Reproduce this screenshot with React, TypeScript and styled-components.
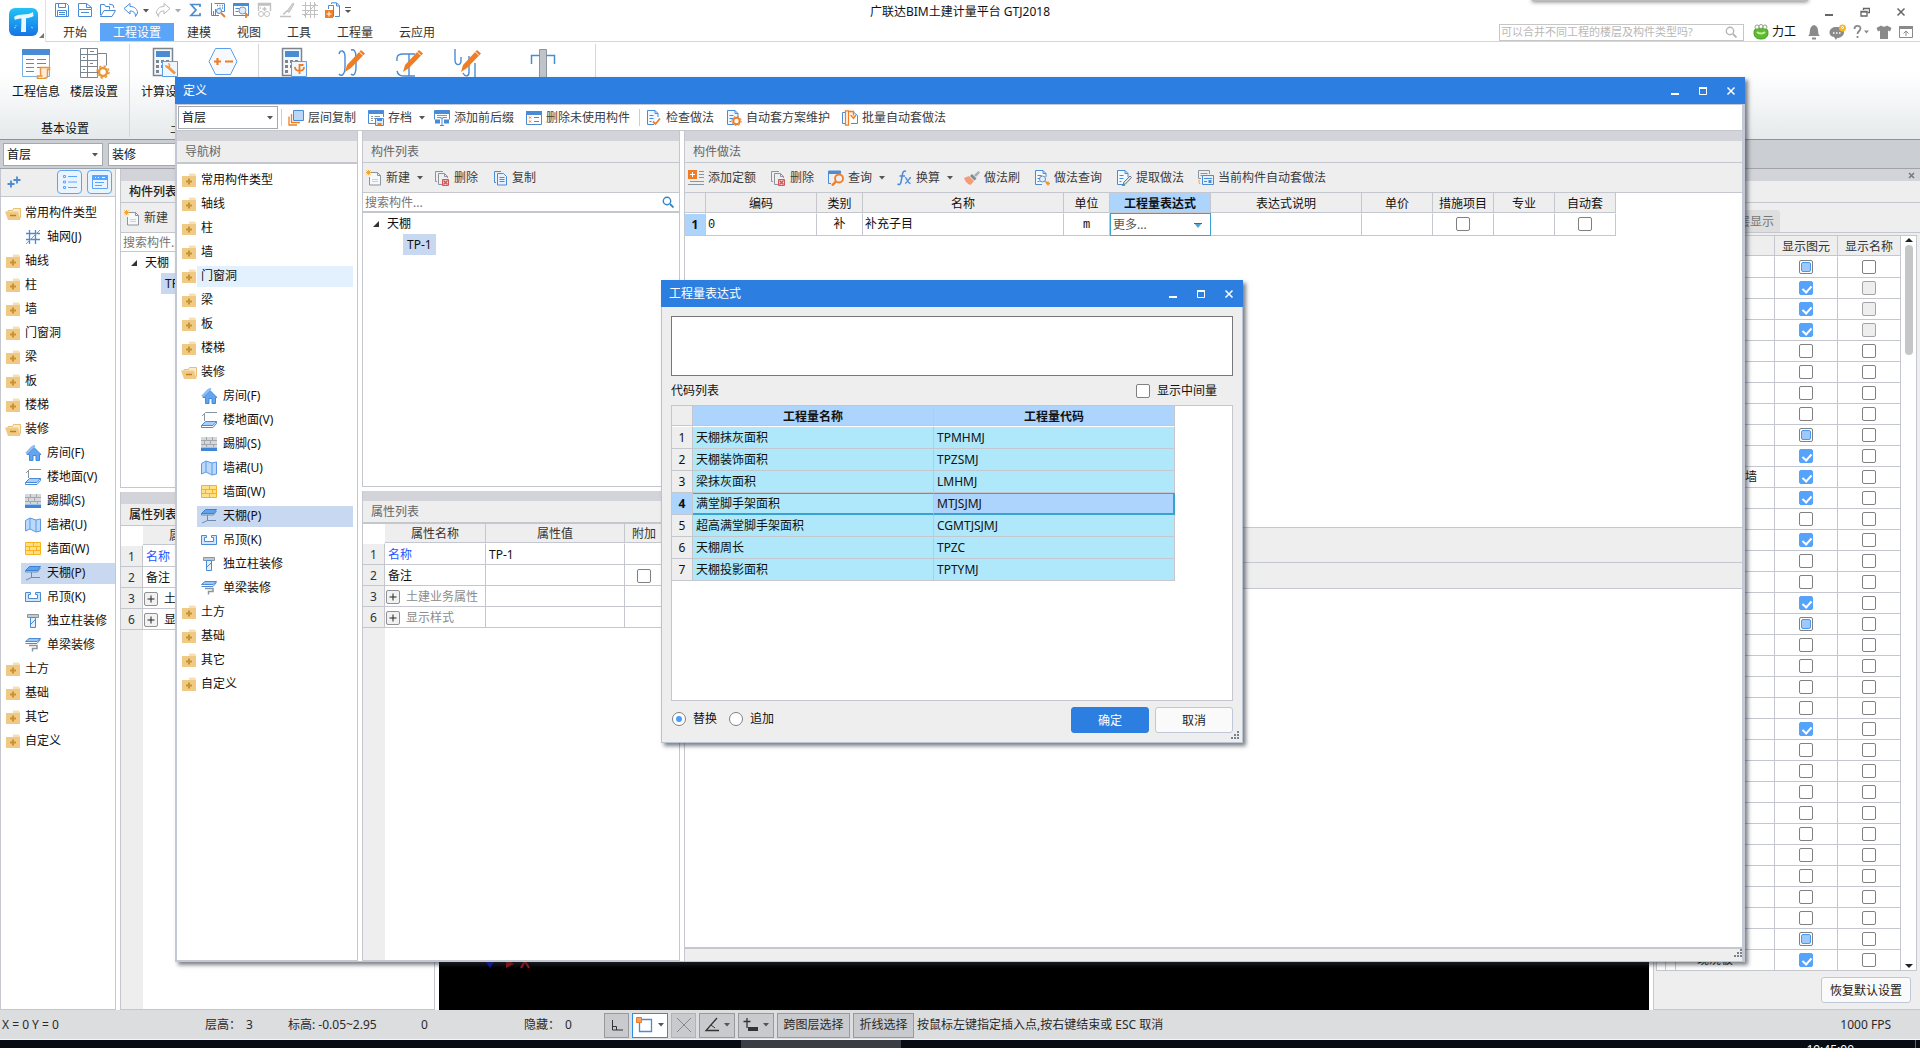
import React from "react";
import styled, { createGlobalStyle, css } from "styled-components";

const c = {
  blue: "#2c7fe1",
  line: "#c4c7ce",
  strip: "#d2d4da",
  face: "#eeeeef",
  sel: "#c8d8f0",
  cellSel: "#acd4fd",
  ib: "#4a8bd6",
  ibl: "#58a6ff",
  io: "#f07d24",
  ig: "#8b959f",
};

const Global = createGlobalStyle`
  * { box-sizing: border-box; }
  body { margin: 0; background: #fff; overflow: hidden; }
  body, button, input, select, textarea, table {
    font-family: "Noto Sans", "Noto Sans CJK SC", sans-serif;
    font-size: 12px;
    line-height: 16px;
    color: #111;
  }
  button { background: none; border: 0; padding: 0; }
  svg { display: block; flex: none; }
`;

/* ---------- icons ---------- */

type IconProps = { w?: number; h?: number; children: React.ReactNode };
const Ic = ({ w = 16, h = 16, children }: IconProps) => (
  <svg width={w} height={h} viewBox={`0 0 ${w} ${h}`} fill="none" stroke={c.ib} strokeWidth="1" aria-hidden="true">
    {children}
  </svg>
);

const Caret = ({ color = "#555" }: { color?: string }) => (
  <Ic w={8} h={4}><path d="M1 0h6L4 3.5z" fill={color} stroke="none" /></Ic>
);

const FolderClosed = () => (
  <Ic>
    <path d="M8 3V1.5h5.500L15 3v1H8z" fill="#f6dfb0" stroke="none" />
    <path d="M1 4h14v11H1z" fill="#f0c984" stroke="none" />
    <path d="M8 6.5v6M5 9.5h6" stroke="#c89433" strokeWidth="2" />
  </Ic>
);
const FolderOpen = () => (
  <Ic>
    <path d="M3 5.5h4.500l1-2h7v9H3z" fill="#fbeccf" stroke="#e9bf73" />
    <path d="M0 6.5h13L15.500 15H3z" fill="#f0c984" stroke="none" />
    <path d="M5 10.5h6" stroke="#b98428" strokeWidth="1.500" />
  </Ic>
);
const GridAxis = () => (
  <Ic><path d="M4.500 1v14M10.500 1v14M1 4.500h14M1 10.500h14" strokeWidth="1.300" /><path d="M1 15L15 1" stroke={c.io} /></Ic>
);
const House = () => (
  <Ic>
    <path d="M1 8.500L7 2l3-1.500" stroke="#8dbdf5" strokeWidth="2" />
    <path d="M2 9.500L9 2.500l7 7h-1.500v6H11v-5H8v5H4.500v-6z" fill="#62a5ee" stroke="#4188dc" />
  </Ic>
);
const FloorIcon = () => (
  <Ic>
    <path d="M3.500 9V1.500M1 4L4.500.500H16" stroke={c.ig} />
    <path d="M4.500 9.500h11L12 13.500H.5z" fill="#a9cdf7" />
    <path d="M.5 13.500v2H12l3.500-4v-2" />
  </Ic>
);
const Skirting = () => (
  <Ic>
    <path d="M0 1h16v10H0z" fill="#d5d7da" stroke="none" />
    <path d="M0 4.500h16M0 8.500h16M5.500 1v3M11.500 1v3M3.500 5v3M9.500 5v3M5.500 9v2M12.500 9v2" stroke="#a3a8ad" />
    <path d="M0 11.500h16V15H0z" fill="#3f86d8" stroke="none" />
  </Ic>
);
const Dado = () => (
  <Ic><path d="M.5 3.500L5 1l6 2 4.500-1v12L11 15l-6-3-4.500 2z" fill="#bcd8fa" stroke="#5b9be6" /><path d="M5 1v11M11 3v12" stroke="#5b9be6" /></Ic>
);
const WallFace = () => (
  <Ic>
    <path d="M.5 1.500h15v12H.5z" fill="#ffe08a" stroke="#f9b21c" />
    <path d="M.5 5.500h15M.5 9.500h15M8.500 1.500v4M4.500 5.500v4M11.500 5.500v4M8.500 9.500v4" stroke="#f9b21c" />
  </Ic>
);
const Ceiling = () => (
  <Ic>
    <path d="M4.500 1.500h11l-3 4H.5z" fill="#5ea3ee" stroke="#3b81d4" />
    <path d="M.5 5.500v1.500h12l3-4M6.500 7v6M1 15l5.500-2.500H15" stroke="#6f8ba8" />
  </Ic>
);
const Hung = () => (
  <Ic><path d="M.5 3.500h5v2h-2v4h9v-4h-2v-2h5v9H.5z" fill="#d4e6fb" /></Ic>
);
const ColumnDeco = () => (
  <Ic><path d="M2.500 1.500h11v3h-11z" fill="#c4c9cf" stroke={c.ig} /><path d="M5.500 4.500h5v10h-5z" fill="#e4effc" /><path d="M6 11l4-4" /></Ic>
);
const BeamDeco = () => (
  <Ic>
    <path d="M4 1.500h11.500L12 4.500H.5z" fill="#9cc6f6" /><path d="M.5 6.500H12l3.500-4" />
    <path d="M4 8.500h8v3H7.500v3" stroke={c.ig} strokeWidth="1.500" />
  </Ic>
);
const NewDoc = () => (
  <Ic><path d="M4.500 2.500h7l3 3v9.500h-11V7" fill="#f7f8f9" stroke={c.ig} /><path d="M11.500 2.500v3h3" stroke={c.ig} /><path d="M6 9.500h6M6 11.500h6" stroke="#cbd0d5" />
    <path d="M.5.5l4 4M4.500.5l-4 4M2.500 0v5M0 2.500h5" stroke="#f0a63c" /></Ic>
);
const DelDoc = () => (
  <Ic><path d="M3 11.500H1.500v-10H9" stroke={c.ig} /><path d="M8 14.500H4.500v-11h6l3 3V8" stroke={c.ig} /><path d="M10.500 3.500v3h3" stroke={c.ig} />
    <path d="M8.500 9.500h6v6h-6z" fill="#f6dada" stroke="#d2555a" /><path d="M9.500 10.500l4 4M13.500 10.500l-4 4" stroke="#d2555a" strokeWidth="1.500" /></Ic>
);
const CopyDoc = () => (
  <Ic><path d="M4 12.500H2.500v-11H9" /><path d="M5.500 3.500h6l3 3v8.500h-9z" fill="#e7f1fd" /><path d="M7.500 7.500h5M7.500 9.500h5M7.500 11.500h5" /></Ic>
);
const LayerCopy = () => (
  <Ic><path d="M5.500.500h10v10h-10z" fill="#b9d7fb" /><path d="M3.500 4v8.500H12M1 6.500v8.500H9" stroke={c.io} strokeWidth="1.300" /></Ic>
);
const Archive = () => (
  <Ic><path d="M.5.500h15v3H.5z" fill={c.ib} /><path d="M.5 4v9.500H7M15.500 4v3" /><path d="M3 6.500h2M6.500 6.500H12M3 8.500h2M3 10.500h2M6 8.500h2" stroke={c.ig} />
    <path d="M7.500 8.500h8v7h-8z" fill="#dcebfc" /><path d="M9 9h5v2H9z" fill={c.ib} stroke="none" /><path d="M9.500 13h4v2.500h-4z" fill={c.io} stroke="none" /></Ic>
);
const Affix = () => (
  <Ic><path d="M.5.500h15v3H.5z" fill={c.ib} /><path d="M.5 3.500v6M15.500 3.500v6" /><path d="M3 5.500h10M3 7.500h4M9 7.500h4" stroke={c.ig} />
    <path d="M1 9.500h5v4H1zM10 9.500h5v4h-5z" fill={c.ib} stroke="none" /><path d="M8 8v7M6 15.500h4M6.500 8h3" /></Ic>
);
const Unused = () => (
  <Ic><path d="M.5 1.500h15v13H.5z" /><path d="M.5 1.500h15v3H.5z" fill={c.ib} /><path d="M3 6.500l2 2M5 6.500l-2 2M3 10.500l2 2M5 10.500l-2 2" stroke={c.io} /><path d="M8 7.500h5M8 11.500h5" /></Ic>
);
const PageB = ({ children }: { children: React.ReactNode }) => (
  <Ic><path d="M8 14.500H1.500v-14H9l3 3V7" fill="#f2f8ff" /><path d="M9 .5v3h3" /><path d="M3.500 5.500h4M3.500 8.500h4M3.500 11.500h2" />{children}</Ic>
);
const Check = () => <PageB><path d="M7 11.500l2.500 2.500L14 8.500" stroke={c.io} strokeWidth="1.800" /></PageB>;
const Maintain = () => (
  <PageB><circle cx="10.500" cy="11" r="3.200" stroke={c.io} strokeWidth="2" fill="#fff" /><circle cx="10.500" cy="11" r="4.700" stroke={c.io} strokeDasharray="1.700 2" /></PageB>
);
const Batch = () => (
  <Ic><path d="M3 13.500H.5v-11H3M10 2.500h2l3.500 3v8H9" /><path d="M3.500.8h3v14.400h-3z" stroke={c.io} strokeWidth="1.300" fill="#fff" /><path d="M6.500 1.500h5v4M8.500 5l3 3.500L14 5" stroke={c.io} strokeWidth="1.300" fill="#ffe6d2" /></Ic>
);
const AddQuota = () => (
  <Ic><path d="M0 0h9v9H0z" fill={c.io} stroke="none" /><path d="M4.500 2v5M2 4.500h5" stroke="#fff" /><path d="M11 1.500h5M11 4.500h5M11 7.500h5M2 11.500h14M0 14.500h16" stroke={c.ig} /></Ic>
);
const Query = () => (
  <Ic><path d="M.5 1h12v2.500H.5z" fill={c.ib} /><path d="M.5 3v10.500H3" /><circle cx="11" cy="8.500" r="4" stroke={c.io} strokeWidth="1.800" /><path d="M8 11.500L4 15.500" stroke={c.io} strokeWidth="2.400" /></Ic>
);
const Fx = () => (
  <Ic><path d="M10 1.500C8 .5 7 1.500 6.500 4L5 12c-.5 2.500-1.500 3-3.500 2M3.500 6H9" strokeWidth="1.500" /><path d="M9 7.500c2-.5 2 6 5.500 6M15 7.500c-2 0-4 6-6 6" strokeWidth="1.300" /></Ic>
);
const Brush = () => (
  <Ic><path d="M0 8l5-2 5 5-3.500 4C3 14 1 11 0 8z" fill="#f59b78" stroke="none" /><path d="M6 6l2-2 4.500 4.500-2 2z" fill="#7e8a95" stroke="none" /><path d="M10 5l4.500-4 1.500 1.500-4 4.500z" fill="#a6aeb6" stroke="none" /></Ic>
);
const MethodQuery = () => (
  <PageB><circle cx="8.500" cy="9" r="3" fill="#e4effc" stroke="#6b87ad" /><path d="M11 11l3 3M14 11.500v4M12 13.500h4" stroke="#e8962e" strokeWidth="1.500" /></PageB>
);
const Extract = () => (
  <PageB><path d="M7 15l1-3 6-6 1.500 1.500-6 6.500z" fill="#dfe4e8" stroke="#6d7880" /><path d="M6 15.500l3-1" stroke="#3a9bb5" strokeWidth="2" /></PageB>
);
const CurrentAuto = () => (
  <Ic><path d="M3 8.500H.5v-8h11V4" stroke={c.ig} /><path d="M2.500 3.500h7M2.500 5.500h2" stroke={c.ig} /><path d="M1 10v3l2 1" stroke={c.io} strokeDasharray="1.500 1" />
    <path d="M4.500 5.500h11v9h-11z" fill="#e4effc" /><path d="M6 8.500h8M6 11.500h3" /><path d="M10.500 10h3v3h-3z" fill={c.ib} stroke="none" /></Ic>
);
const SearchIcon = ({ color = "#2f86c9" }: { color?: string }) => (
  <Ic w={12} h={12}><circle cx="5" cy="5" r="3.700" stroke={color} strokeWidth="1.400" /><path d="M8 8l3.500 3.500" stroke={color} strokeWidth="1.800" /></Ic>
);
const MinIcon = ({ color = "#fff" }: { color?: string }) => <Ic w={10} h={10}><path d="M1 8h8" stroke={color} strokeWidth="2" /></Ic>;
const MaxIcon = () => <Ic w={10} h={10}><path d="M1.500 2v6.500h7V2" stroke="#fff" /><path d="M1 2h8" stroke="#fff" strokeWidth="2" /></Ic>;
const CloseIcon = ({ color = "#fff" }: { color?: string }) => <Ic w={10} h={10}><path d="M1.500 1.500l7 7M8.500 1.500l-7 7" stroke={color} strokeWidth="1.500" /></Ic>;
const RestoreIcon = () => <Ic w={10} h={10}><path d="M3.500 3V1.500h6v4H7.500" stroke="#666" strokeWidth="1.300" /><path d="M1 4.500h6v4.500H1z" stroke="#666" strokeWidth="1.300" /><path d="M1 5h6" stroke="#666" /></Ic>;
const Grip = () => (
  <Ic w={8} h={8}><path d="M6 0h2v2H6zM3 3h2v2H3zM6 3h2v2H6zM0 6h2v2H0zM3 6h2v2H3zM6 6h2v2H6z" fill="#7c828c" stroke="none" /></Ic>
);

const Logo = () => (
  <Ic w={30} h={30}>
    <defs>
      <linearGradient id="logo" x1="0" y1="0" x2="0" y2="1"><stop offset="0" stopColor="#22c3f7" /><stop offset="1" stopColor="#1673e6" /></linearGradient>
    </defs>
    <rect x="0" y="0" width="29" height="28" rx="6" fill="url(#logo)" stroke="none" />
    <path d="M5 9c5-4 13-1 19-5l.5 4c-2 1.500-5 2-7.500 2.300L17 24h-5l.5-13.500C10 10.500 8 11 6 12z" fill="#e9f6ff" stroke="none" />
    <path d="M5 20l2-1M22 19l2 1M7 17v1" stroke="#8fd8ff" />
  </Ic>
);

/* quick access */
const quick: Array<[string, React.ReactNode] | null> = [
  ["保存", <Ic><path d="M1.500 1.500h11l2 2v11h-13z" /><path d="M4.500 1.500h7v4h-7zM3.500 14.500v-6h9v6M5 10.500h6M5 12.500h6" /></Ic>],
  ["新建工程", <Ic><path d="M1.500 7V1.500h8l5 4V7M9.500 1.500v4h5" /><path d="M1.500 7.500h13v7h-13z" /><path d="M4 10.500h8" /></Ic>],
  ["打开", <Ic><path d="M.5 13V2.500h4l1 2h4v3M9 2l4 1 1 3" /><path d="M.5 14.500L4 8.500h11.500L12 14.500z" /></Ic>],
  ["撤销", <Ic><path d="M1 6.500l6-5v3c5 0 7.500 3 7.500 6.500l-2 3.500c0-4-2-5.500-5.500-5.500v3z" /></Ic>],
  null,
  ["重做", <Ic><path d="M15 6.500l-6-5v3C4 4.500 1.500 7.500 1.500 11l2 3.500c0-4 2-5.500 5.500-5.500v3z" stroke="#b6b8bb" /></Ic>],
  null,
  ["汇总计算", <Ic><path d="M13 5V2.500H4l5 5.500-5 5.500h9V11" strokeWidth="1.700" /></Ic>],
  ["查看工程量", <Ic><path d="M1.500 1v12.500H9M3.500 13V9M5.500 13V7" /><path d="M4.500 1.500h10v8h-6" /><path d="M7 3.500h1M9.500 3.500h1M12 3.500h1M9.500 6h1M12 6h1" strokeWidth="1.500" /><circle cx="9" cy="9" r="2.500" fill="#dfeefd" /><path d="M11 11l4 4" stroke={c.io} strokeWidth="2" /></Ic>],
  ["查看计算式", <Ic><path d="M.5 1.500h15v12H.5z" /><path d="M.5 1.500h15v2H.5z" fill={c.ib} /><path d="M2.500 6.500h4M2.500 9.500h3" /><circle cx="9.500" cy="8.500" r="3.500" fill="#dfeefd" stroke={c.ig} /><path d="M12 11l3.500 3M13 11v5" stroke={c.io} strokeWidth="1.700" /></Ic>],
  ["查看", <Ic><path d="M2.500 9V1.500h12V9M2.500 3h12M8.500 5v4M6.500 7h4M4 6h1" stroke="#c1c1c1" strokeWidth="1.400" /><circle cx="5" cy="12" r="2.500" stroke="#c1c1c1" /><circle cx="11" cy="12" r="2.500" stroke="#c1c1c1" /></Ic>],
  ["绘制", <Ic><path d="M8 9l6-8 1 1-5 8.500z" fill="#d2d2d2" stroke="#c1c1c1" /><path d="M8 9c-2 1-2 3-4 3M1 14.500h11" stroke="#c1c1c1" strokeWidth="1.600" /></Ic>],
  ["轴网", <Ic><path d="M3.500 0v16M8.500 0v16M12.500 0v16M0 3.500h16M0 8.500h16M0 12.500h16M2 14L14 2" stroke="#c1c1c1" /></Ic>],
  ["导入", <Ic><path d="M3.500 7V3.500h5v11h-1" /><path d="M6.500 2V.8h5l3 3v10.700H10M11.500 1v3h3" /><path d="M0 8h8v8H0z" fill={c.io} stroke="none" /><path d="M4 9.500v5M1.500 12h5" stroke="#fff" /></Ic>],
];

/* ribbon */
const RInfo = () => (
  <Ic w={32} h={32}><path d="M2.500 2.500h27v27h-27z" stroke="#7aaee8" /><path d="M2 2h28v6H2z" fill={c.ib} stroke="none" />
    <path d="M6 12.500h8M17 12.500h9M6 16.500h8M17 16.500h9M6 20.500h8M17 20.500h6M6 24.500h8" stroke="#7b858f" />
    <path d="M20.500 20.500h9v2h-2v6c0 3-2 3-4 3h-6v-2.500h5c-2 0-2-1-2-3z" fill="#fdebd8" stroke="#e8963a" strokeWidth="1.500" /></Ic>
);
const RFloor = () => (
  <Ic w={32} h={32}><path d="M2.500 1.500h17v29h-17zM2.500 7.500h17M2.500 13.500h17M2.500 19.500h17M2.500 25.500h17M9.500 1.500v29M12 4.500h4M5 10.500h2M12 16.500h3M5 22.500h2M19.500 6.500h9v12" stroke="#7b858f" />
    <circle cx="25" cy="25" r="4" stroke="#e8963a" strokeWidth="2.500" fill="#fff" /><circle cx="25" cy="25" r="6" stroke="#e8963a" strokeWidth="1.500" strokeDasharray="2.300 2.400" /></Ic>
);
const RCalc = ({ children }: { children?: React.ReactNode }) => (
  <Ic w={32} h={32}><path d="M4.500 1.500h19v27h-19z" stroke="#7b858f" strokeWidth="1.500" fill="#f6f7f8" /><path d="M7 4h14v6H7z" fill={c.ib} stroke="none" />
    <path d="M7 13h3v3H7zM12 13h3v3h-3zM17 13h3v3h-3zM7 18h3v3H7zM12 18h3v3h-3zM7 23h3v3H7z" fill="#7b858f" stroke="none" />
    <path d="M13.500 14.500h15v15h-15z" fill="#eef6ff" stroke="#5a9fec" />{children}</Ic>
);
const RWrench = () => <RCalc><path d="M19 20l7 6.500" stroke="#ee9b48" strokeWidth="3" /><path d="M16 18c0 4 4 4 5 2s0-4-2-4l1 3z" fill="#ee9b48" stroke="none" /></RCalc>;
const RRebar = () => <RCalc><path d="M17 20c0 5 9 5 9 0M21.500 27v-9h4" stroke={c.io} strokeWidth="1.800" /></RCalc>;
const RHex = () => (
  <Ic w={32} h={32}><path d="M8.500 1.500h15L30 14.500l-6.500 13h-15L2 14.500z" stroke="#5a9fec" fill="#f6faff" /><path d="M7 14.500h7M10.500 11v7M18 14.500h8" stroke={c.io} strokeWidth="2.200" /></Ic>
);
const RPen = ({ d }: { d: string }) => (
  <Ic w={32} h={32}><path d={d} strokeWidth="1.400" /><path d="M9 25l2-7L25 3l4 3.500L15 21z" fill={c.io} stroke="none" /><path d="M23 4.500l4 4" stroke="#fff" /></Ic>
);
const RBeam = () => (
  <Ic w={32} h={32}><path d="M12.500 2.500h7V32h-7z" fill="#bfc4ca" stroke={c.ig} /><path d="M4.500 17V8.500h8M19.500 8.500h8V17" strokeWidth="1.500" /></Ic>
);

/* ---------- header ---------- */

const Page = styled.div`
  position: relative;
  display: flex;
  flex-direction: column;
  height: 100vh;
  background: #fff;
  overflow: hidden;
`;
const Header = styled.header`
  display: grid;
  grid-template-columns: 46px 1fr;
  grid-template-rows: 23px 19px;
`;
const LogoBox = styled.div`
  grid-area: 1 / 1 / 3 / 2;
  display: flex;
  align-items: flex-end;
  padding: 0 0 4px 9px;
  border-right: 1px solid #e2e2e2;
`;
const TopRow = styled.div`
  grid-area: 1 / 1 / 2 / 3;
  display: grid;
  grid-template-columns: minmax(0, 1fr) auto minmax(0, 1fr);
  align-items: center;
`;
const Quick = styled.div`
  display: flex;
  align-items: center;
  padding: 0 0 3px 50px;
`;
const QuickButton = styled.button`
  width: 23px;
  display: flex;
  justify-content: center;
`;
const QuickCaret = styled.button`
  width: 9px;
  padding-top: 2px;
`;
const AppTitle = styled.h1`
  margin: 0;
  font-size: 12px;
  font-weight: 400;
  line-height: 20px;
`;
const AppControls = styled.div`
  display: flex;
  justify-content: flex-end;
  gap: 26px;
  padding-right: 14px;
`;
const PeekShadow = styled.div`
  position: absolute;
  top: -4px;
  right: 112px;
  width: 276px;
  height: 5px;
  background: #bbb;
  box-shadow: 0 1px 4px rgba(0, 0, 0, 0.5);
`;
const TabRow = styled.div`
  grid-area: 2 / 2 / 3 / 3;
  display: flex;
  padding-left: 4px;
  border-bottom: 1px solid #d4d6d9;
`;
const RibbonTab = styled.button<{ $active?: boolean }>`
  padding: 1px 13px 0;
  color: ${(p) => (p.$active ? "#fff" : "#333")};
  background: ${(p) => (p.$active ? "#5aa5f8" : "transparent")};
`;
const HeaderTools = styled.div`
  display: flex;
  align-items: center;
  gap: 7px;
  margin-left: auto;
  padding-right: 7px;
`;
const HelpSearch = styled.div`
  display: flex;
  align-items: center;
  width: 245px;
  height: 17px;
  margin-right: 2px;
  padding-right: 6px;
  border: 1px solid #c6c6c6;
  input {
    flex: 1;
    min-width: 0;
    border: 0;
    padding: 0 1px;
    font-size: 11px;
    line-height: 14px;
    outline: 0;
    background: none;
  }
  input::placeholder { color: #b8b8b8; }
`;
const UserButton = styled.button`
  display: flex;
  align-items: center;
  gap: 3px;
  margin-right: 3px;
`;

const Ribbon = styled.div`
  display: flex;
  height: 98px;
  padding: 2px 0 2px 1px;
  background: linear-gradient(#fff 30%, #e6eaec);
  border-bottom: 1px solid #8e9298;
`;
const Group = styled.section`
  display: flex;
  flex-direction: column;
  justify-content: space-between;
  padding: 3px 6px 0;
  border-right: 1px solid #d5d7da;
  text-align: center;
`;
const GroupButtons = styled.div`
  display: flex;
`;
const RibbonButton = styled.button<{ $wide?: boolean }>`
  width: ${(p) => (p.$wide ? 92 : 58)}px;
  display: flex;
  flex-direction: column;
  align-items: center;
  gap: 5px;
`;

/* ---------- shared parts ---------- */

const SelectBox = styled.div<{ $w: number }>`
  position: relative;
  flex: none;
  width: ${(p) => p.$w}px;
  height: 23px;
  border: 1px solid #a5a8ad;
  background: #fff;
  select {
    appearance: none;
    width: 100%;
    height: 100%;
    padding: 0 3px;
    border: 0;
    background: transparent;
    outline: 0;
  }
  svg { position: absolute; right: 3px; top: 9px; pointer-events: none; }
`;
const Pick = ({ w, value, label }: { w: number; value: string; label: string }) => (
  <SelectBox $w={w}>
    <select aria-label={label} defaultValue={value}><option>{value}</option></select>
    <Caret />
  </SelectBox>
);

const FloorBar = styled.div`
  display: flex;
  gap: 5px;
  height: 29px;
  padding: 3px;
  background: #cbced3;
  border-bottom: 1px solid #a0a4aa;
`;
const Workspace = styled.main`
  flex: 1;
  min-height: 0;
  display: flex;
  gap: 4px;
`;
const Column = styled.div<{ $w?: number }>`
  display: flex;
  flex-direction: column;
  gap: 4px;
  min-width: 0;
  ${(p) => (p.$w ? css`flex: none; width: ${p.$w}px;` : css`flex: 1;`)}
`;
const Panel = styled.section<{ $h?: number; $open?: boolean; $bare?: boolean }>`
  display: flex;
  flex-direction: column;
  min-height: 0;
  ${(p) => (p.$h ? css`flex: none; height: ${p.$h}px;` : css`flex: 1;`)}
  background: #fff;
  border: 1px solid ${c.line};
  border-top: 0;
  ${(p) => p.$open && css`border-right: 0; border-bottom: 0;`}
  ${(p) => p.$bare && css`border: 0;`}
`;
const EdgePanel = styled(Panel)`
  border-left: 0;
`;
const Strip = styled.div<{ $h?: number }>`
  flex: none;
  display: flex;
  justify-content: flex-end;
  align-items: center;
  height: ${(p) => p.$h || 10}px;
  padding-right: 5px;
  background: ${c.strip};
`;
const PanelTitle = styled.h2<{ $thick?: boolean; $strong?: boolean }>`
  flex: none;
  height: ${(p) => (p.$thick ? 23 : 22)}px;
  margin: 0;
  padding: 0 8px;
  font-size: 12px;
  font-weight: ${(p) => (p.$strong ? 500 : 400)};
  line-height: 21px;
  color: ${(p) => (p.$strong ? "#222" : "#666")};
  background: ${c.face};
  border-bottom: ${(p) => (p.$thick ? 2 : 1)}px solid ${c.line};
`;
const Toolbar = styled.div<{ $gap?: number }>`
  flex: none;
  display: flex;
  align-items: center;
  gap: ${(p) => p.$gap || 5}px;
  height: 30px;
  background: ${c.face};
  border-bottom: 1px solid ${c.line};
`;
const ToolButton = styled.button<{ $menu?: boolean }>`
  display: flex;
  align-items: center;
  gap: 4px;
  flex: none;
  height: 22px;
  padding: 0 ${(p) => (p.$menu ? 2 : 6)}px 0 3px;
  color: #3c3c3c;
  white-space: nowrap;
`;
const MenuCaret = styled.span`
  margin-left: 2px;
`;
const Tool = ({ icon, text, menu }: { icon: React.ReactNode; text: string; menu?: boolean }) => (
  <ToolButton $menu={menu}>{icon}{text}{menu && <MenuCaret><Caret /></MenuCaret>}</ToolButton>
);
const SearchRow = styled.div<{ $thick?: boolean }>`
  flex: none;
  display: flex;
  align-items: center;
  height: ${(p) => (p.$thick ? 20 : 19)}px;
  padding-right: 5px;
  border-bottom: ${(p) => (p.$thick ? 2 : 1)}px solid ${c.line};
  input {
    flex: 1;
    min-width: 0;
    height: 18px;
    padding: 0 2px;
    border: 0;
    outline: 0;
    background: none;
  }
  input::placeholder { color: #757575; }
`;

const Tick = styled.input<{ $mixed?: boolean }>`
  appearance: none;
  position: relative;
  flex: none;
  width: 14px;
  height: 14px;
  margin: 0;
  vertical-align: middle;
  border: 1px solid #808080;
  border-radius: 2px;
  background: #fff;
  &:disabled { background: #eee; border-color: #a4a4a4; }
  &:checked { background: #56a3fb; border-color: #56a3fb; }
  &:checked::after {
    content: "";
    position: absolute;
    left: 4px;
    top: 2px;
    width: 4px;
    height: 7px;
    border: solid #fff;
    border-width: 0 2px 2px 0;
    transform: rotate(42deg);
  }
  ${(p) => p.$mixed && css`
    &::before {
      content: "";
      position: absolute;
      inset: 1px;
      border: 1px solid #4a98f5;
      border-radius: 2px;
      background: #9dc9fd;
    }
  `}
`;

/* ---------- trees ---------- */

type Node = { t: string; icon: React.ReactNode; child?: boolean };
const closed = (t: string): Node => ({ t, icon: <FolderClosed /> });
const finishes: Node[] = [
  { t: "房间(F)", icon: <House />, child: true },
  { t: "楼地面(V)", icon: <FloorIcon />, child: true },
  { t: "踢脚(S)", icon: <Skirting />, child: true },
  { t: "墙裙(U)", icon: <Dado />, child: true },
  { t: "墙面(W)", icon: <WallFace />, child: true },
  { t: "天棚(P)", icon: <Ceiling />, child: true },
  { t: "吊顶(K)", icon: <Hung />, child: true },
  { t: "独立柱装修", icon: <ColumnDeco />, child: true },
  { t: "单梁装修", icon: <BeamDeco />, child: true },
];
const tail: Node[] = [
  ...["轴线", "柱", "墙", "门窗洞", "梁", "板", "楼梯"].map(closed),
  { t: "装修", icon: <FolderOpen /> },
  ...finishes,
  ...["土方", "基础", "其它", "自定义"].map(closed),
];
const mainTree: Node[] = [
  { t: "常用构件类型", icon: <FolderOpen /> },
  { t: "轴网(J)", icon: <GridAxis />, child: true },
  ...tail,
];
const defTree: Node[] = [closed("常用构件类型"), ...tail];

const Tree = styled.ul<{ $inset?: boolean }>`
  list-style: none;
  margin: 0;
  padding: 4px ${(p) => (p.$inset ? 4 : 0)}px 0 4px;
`;
const TreeItem = styled.li<{ $child?: boolean }>`
  display: flex;
  align-items: center;
  height: 24px;
  padding-left: ${(p) => (p.$child ? 16 : 0)}px;
`;
const TreeLabel = styled.button<{ $tone?: string }>`
  flex: 1;
  display: flex;
  align-items: center;
  gap: 6px;
  height: 21px;
  padding-left: 4px;
  background: ${(p) => p.$tone || "transparent"};
  white-space: nowrap;
  text-align: left;
`;
const NavTree = ({ nodes, hover, inset }: { nodes: Node[]; hover?: string; inset?: boolean }) => (
  <Tree $inset={inset}>
    {nodes.map((n) => {
      const tone = n.t === "天棚(P)" ? c.sel : n.t === hover ? "#e3f0fd" : undefined;
      return (
        <TreeItem key={n.t} $child={n.child}>
          {!n.child && n.icon}
          <TreeLabel $tone={tone}>{n.child && n.icon}{n.t}</TreeLabel>
        </TreeItem>
      );
    })}
  </Tree>
);

const CompTree = styled.ul`
  list-style: none;
  margin: 0;
  padding: 0;
  ul { list-style: none; margin: 0; padding: 0 0 0 40px; }
`;
const CompRow = styled.button<{ $on?: boolean }>`
  display: flex;
  align-items: center;
  gap: 8px;
  height: 21px;
  padding: 0 ${(p) => (p.$on ? 4 : 10)}px;
  ${(p) => p.$on && css`background: ${c.sel};`}
`;
const Components = () => (
  <CompTree>
    <li>
      <CompRow><Ic w={6} h={6}><path d="M6 0v6H0z" fill="#333" stroke="none" /></Ic>天棚</CompRow>
      <ul><li><CompRow $on>TP-1</CompRow></li></ul>
    </li>
  </CompTree>
);

/* ---------- tables ---------- */

const Cols = ({ widths }: { widths: Array<number | undefined> }) => (
  <colgroup>{widths.map((w, i) => <col key={i} style={{ width: w }} />)}</colgroup>
);

const Grid = styled.table`
  table-layout: fixed;
  border-collapse: separate;
  border-spacing: 0;
  th, td {
    padding: 0 3px;
    border-right: 1px solid ${c.line};
    border-bottom: 1px solid ${c.line};
    font-weight: 400;
    text-align: left;
    white-space: nowrap;
    overflow: hidden;
  }
  thead th { padding-top: 2px; background: ${c.face}; text-align: center; }
  tbody tr:first-child > * { border-top: 1px solid #fff; }
  tbody th { background: ${c.face}; text-align: center; }
`;
const PropGrid = styled(Grid)`
  thead tr { height: 19px; }
  tbody tr { height: 21px; }
  tbody tr:first-child { height: 22px; }
  thead th:first-child { background: #fff; border-color: #fff; }
  thead th, tbody th { color: #333; }
  tbody td, tbody th { padding-top: 1px; }
  td:last-child { text-align: center; }
`;
const TableArea = styled.div<{ $gutter?: boolean }>`
  flex: 1;
  min-height: 0;
  overflow: hidden;
  ${(p) => p.$gutter && css`background: linear-gradient(90deg, ${c.face} 22px, #fff 22px);`}
`;
const PropName = styled.span<{ $tone?: string }>`
  display: flex;
  align-items: center;
  gap: 6px;
  color: ${(p) => p.$tone || "#111"};
`;
const Expander = styled.button`
  display: grid;
  place-items: center;
  width: 14px;
  height: 14px;
  margin-left: -2px;
  border: 1px solid #909090;
  border-radius: 2px;
  background: #f2f2f2;
`;
const Plus = ({ label }: { label: string }) => (
  <Expander aria-label={label}><Ic w={8} h={8}><path d="M4 .5v7M.5 4h7" stroke="#222" /></Ic></Expander>
);
const Properties = ({ muted }: { muted?: boolean }) => {
  const tone = muted ? "#8c8c8c" : "#111";
  return (
    <TableArea $gutter>
      <PropGrid>
        <Cols widths={[22, 101, 139, 39]} />
        <thead><tr><th aria-label="序号" /><th>属性名称</th><th>属性值</th><th>附加</th></tr></thead>
        <tbody>
          <tr><th>1</th><td><PropName $tone="#1d56ff">名称</PropName></td><td>TP-1</td><td /></tr>
          <tr><th>2</th><td><PropName>备注</PropName></td><td /><td><Tick type="checkbox" aria-label="备注附加" /></td></tr>
          <tr><th>3</th><td><PropName $tone={tone}><Plus label="展开土建业务属性" />土建业务属性</PropName></td><td /><td /></tr>
          <tr><th>6</th><td><PropName $tone={tone}><Plus label="展开显示样式" />显示样式</PropName></td><td /><td /></tr>
        </tbody>
      </PropGrid>
    </TableArea>
  );
};

/* ---------- main panels ---------- */

const NavHead = styled.div`
  flex: none;
  display: flex;
  align-items: center;
  gap: 5px;
  height: 28px;
  padding: 0 3px 2px 6px;
  background: ${c.face};
  border-bottom: 1px solid ${c.line};
  & > svg { margin-right: auto; }
`;
const ViewButton = styled.button`
  display: grid;
  place-items: center;
  width: 25px;
  height: 24px;
  border: 1px solid #5aa5f8;
  border-radius: 4px;
  background: #eaf4ff;
`;
const Canvas = styled.div`
  flex: 1;
  display: flex;
  align-items: flex-end;
  padding: 0 0 41px 44px;
  background: #000;
`;

const SidePanel = styled(Panel)`
  background: ${c.face};
  border-right: 0;
`;
const SideTabs = styled.div`
  flex: none;
  display: flex;
  align-items: flex-end;
  height: 30px;
  padding-left: 6px;
  border-bottom: 1px solid ${c.line};
`;
const SideTab = styled.button<{ $off?: boolean }>`
  width: 60px;
  height: 22px;
  padding-top: 2px;
  color: #777;
  background: ${(p) => (p.$off ? "#dedede" : "#eee")};
  border-radius: 3px 3px 0 0;
`;
const LayerBox = styled.div`
  flex: none;
  display: flex;
  margin: 2px 3px 0 2px;
  border: 1px solid ${c.line};
  background: #fff;
`;
const LayerGrid = styled(Grid)`
  flex: 1;
  thead tr { height: 20px; }
  thead th { color: #333; padding: 2px 0 0; }
  tbody tr { height: 21px; }
  tbody tr:last-child { height: 20px; }
  tbody tr:last-child td { border-bottom: 0; }
  tbody tr:first-child { height: 22px; }
  td:nth-child(n + 4) { text-align: center; line-height: 14px; }
  td:nth-child(3) { padding-left: 21px; }
`;
const ScrollBar = styled.div`
  width: 15px;
  display: flex;
  flex-direction: column;
  align-items: center;
  justify-content: space-between;
  padding: 2px 0;
  &::before {
    content: "";
    order: 1;
    flex: none;
    width: 8px;
    height: 110px;
    margin: 3px 0 auto;
    border-radius: 4px;
    background: #c5c6c8;
  }
  svg:last-child { order: 2; }
`;
const SideFoot = styled.div`
  display: flex;
  justify-content: flex-end;
  padding: 6px 9px 0;
`;
const PlainButton = styled.button<{ $w: number; $primary?: boolean }>`
  width: ${(p) => p.$w}px;
  height: 26px;
  padding-top: 1px;
  border: 1px solid ${(p) => (p.$primary ? c.blue : "#bfc8d8")};
  border-radius: 3px;
  background: ${(p) => (p.$primary ? c.blue : "#fafafb")};
  color: ${(p) => (p.$primary ? "#fff" : "#222")};
`;

const layerState = "MCCC....MCCC.C..CM....C.........MC";
const layerNames: Record<number, string> = { 10: "人防门框墙", 33: "现浇板" };

const LayerPanel = () => (
  <Column $w={267}>
    <SidePanel>
      <Strip $h={12}><button aria-label="关闭面板"><Ic w={7} h={7}><path d="M1 1l5 5M6 1l-5 5" stroke="#777" strokeWidth="1.500" /></Ic></button></Strip>
      <PanelTitle />
      <SideTabs><SideTab>图层显示</SideTab><SideTab $off>楼层显示</SideTab></SideTabs>
      <LayerBox>
        <LayerGrid>
          <Cols widths={[9, 10, undefined, 63, 63]} />
          <thead><tr><th colSpan={3} aria-label="构件" /><th>显示图元</th><th>显示名称</th></tr></thead>
          <tbody>
            {layerState.split("").map((s, i) => (
              <tr key={i}>
                <td /><td /><td>{layerNames[i]}</td>
                <td><Tick type="checkbox" aria-label={`显示图元 ${i + 1}`} $mixed={s === "M"} defaultChecked={s === "C"} /></td>
                <td><Tick type="checkbox" aria-label={`显示名称 ${i + 1}`} disabled={i > 0 && i < 4} /></td>
              </tr>
            ))}
          </tbody>
        </LayerGrid>
        <ScrollBar>
          <Ic w={8} h={4}><path d="M0 4h8L4 0z" fill="#222" stroke="none" /></Ic>
          <Ic w={8} h={4}><path d="M0 0h8L4 4z" fill="#222" stroke="none" /></Ic>
        </ScrollBar>
      </LayerBox>
      <SideFoot><PlainButton $w={90}>恢复默认设置</PlainButton></SideFoot>
    </SidePanel>
  </Column>
);

/* ---------- status bar ---------- */

const Status = styled.footer`
  flex: none;
  display: flex;
  align-items: center;
  gap: 3px;
  height: 30px;
  padding-top: 1px;
  background: #dcdddf;
  border-bottom: 1px solid #f6f6f6;
  color: #2a2a2a;
  white-space: nowrap;
`;
const Field = styled.span<{ $w: number }>`
  flex: none;
  display: flex;
  gap: 5px;
  width: ${(p) => p.$w}px;
  padding-left: 2px;
`;
const StatusButton = styled.button<{ $w: number; $active?: boolean; $dim?: boolean }>`
  flex: none;
  display: flex;
  align-items: center;
  justify-content: center;
  gap: 3px;
  width: ${(p) => p.$w}px;
  height: 25px;
  border: 1px solid ${(p) => (p.$active ? "#2a8dee" : p.$dim ? "#b0b2b5" : "#97999c")};
  background: ${(p) => (p.$active ? "#fff" : "#c9cacd")};
  color: #2a2a2a;
`;
const Fps = styled.span`
  margin-left: auto;
  padding-right: 29px;
`;
const Taskbar = styled.div`
  flex: none;
  display: flex;
  justify-content: space-between;
  height: 8px;
  padding: 0 4px 0 741px;
  background: #060b14;
  overflow: hidden;
  &::before { content: ""; width: 160px; background: #3a3d44; }
  time {
    padding-right: 61px;
    border-right: 1px solid #666;
    color: #fff;
    line-height: 20px;
  }
`;

/* ---------- dialogs ---------- */

const Window = styled.div`
  position: absolute;
  display: flex;
  flex-direction: column;
  box-shadow: 3px 3px 4px rgba(40, 45, 55, 0.6);
`;
const DefineWindow = styled(Window)`
  inset: 77px 175px 86px;
  background: #fff;
`;
const ExprWindow = styled(Window)`
  left: 661px;
  top: 280px;
  width: 582px;
  height: 463px;
  background: ${c.face};
`;
const TitleBar = styled.div`
  flex: none;
  display: flex;
  align-items: center;
  height: 27px;
  padding-left: 8px;
  background: ${c.blue};
  color: #fff;
  h2 { flex: 1; margin: 0; font-size: 12px; font-weight: 400; }
  button { display: grid; place-items: center; width: 28px; height: 27px; }
`;
const Title = ({ text }: { text: string }) => (
  <TitleBar>
    <h2>{text}</h2>
    <button aria-label="最小化"><MinIcon /></button>
    <button aria-label="最大化"><MaxIcon /></button>
    <button aria-label="关闭"><CloseIcon /></button>
  </TitleBar>
);
const DefineBody = styled.div`
  flex: 1;
  min-height: 0;
  display: flex;
  flex-direction: column;
  border: solid #c3c8d4;
  border-width: 1px 3px 1px 2px;
`;
const MainToolbar = styled(Toolbar)`
  height: 26px;
  padding-left: 1px;
  background: #fff;
`;
const Divider = styled.span`
  flex: none;
  width: 1px;
  height: 17px;
  background: #ccced2;
`;
const DefineColumns = styled.div`
  flex: 1;
  min-height: 0;
  display: flex;
  gap: 4px;
`;
const MethodGrid = styled(Grid)`
  thead tr { height: 20px; }
  tbody tr { height: 23px; }
  tbody th { background: ${c.cellSel}; font-weight: 700; }
  tbody td { font-family: "Liberation Mono", "Noto Sans CJK SC", monospace; padding: 0 2px; }
`;
const HeadCell = styled.th<{ $on?: boolean }>`
  ${(p) => p.$on && css`&&&& { background: ${c.cellSel}; font-weight: 700; }`}
`;
const MidCell = styled.td`
  &&&& { text-align: center; }
`;
const ExprCell = styled.td`
  &&&& { padding: 0; border: 1px solid #38a3cf; }
`;
const ExprPick = styled.div`
  position: relative;
  height: 20px;
  select {
    appearance: none;
    width: 100%;
    height: 100%;
    padding: 0 2px;
    border: 0;
    outline: 0;
    background: transparent;
    color: #555;
  }
  svg { position: absolute; right: 8px; top: 8px; pointer-events: none; }
`;
const SubBar = styled.div<{ $h: number }>`
  flex: none;
  height: ${(p) => p.$h}px;
  background: ${c.face};
  border-top: 1px solid ${c.line};
`;
const Blank = styled.div`
  flex: 1;
  border: solid ${c.line};
  border-width: 1px 0 2px;
`;
const GripBar = styled.div`
  flex: none;
  display: flex;
  align-items: flex-start;
  justify-content: flex-end;
  height: 12px;
  background: ${c.face};
`;

const methodCols: Array<[string, number]> = [
  ["编码", 111], ["类别", 46], ["名称", 201], ["单位", 46], ["工程量表达式", 101],
  ["表达式说明", 151], ["单价", 71], ["措施项目", 61], ["专业", 61], ["自动套", 61],
];

const Define = () => (
  <DefineWindow role="dialog" aria-label="定义">
    <Title text="定义" />
    <DefineBody>
      <MainToolbar $gap={3}>
        <Pick w={100} value="首层" label="楼层" />
        <Divider />
        <Tool icon={<LayerCopy />} text="层间复制" />
        <Tool icon={<Archive />} text="存档" menu />
        <Tool icon={<Affix />} text="添加前后缀" />
        <Tool icon={<Unused />} text="删除未使用构件" />
        <Divider />
        <Tool icon={<Check />} text="检查做法" />
        <Tool icon={<Maintain />} text="自动套方案维护" />
        <Tool icon={<Batch />} text="批量自动套做法" />
      </MainToolbar>
      <DefineColumns>
        <Column $w={181}>
          <EdgePanel as="nav">
            <Strip />
            <PanelTitle $thick>导航树</PanelTitle>
            <NavTree nodes={defTree} hover="门窗洞" inset />
          </EdgePanel>
        </Column>
        <Column $w={318}>
          <Panel $h={356}>
            <Strip />
            <PanelTitle>构件列表</PanelTitle>
            <Toolbar>
              <Tool icon={<NewDoc />} text="新建" menu />
              <Tool icon={<DelDoc />} text="删除" />
              <Tool icon={<CopyDoc />} text="复制" />
            </Toolbar>
            <SearchRow $thick><input aria-label="搜索构件" placeholder="搜索构件..." /><SearchIcon /></SearchRow>
            <Components />
          </Panel>
          <Panel>
            <Strip />
            <PanelTitle $thick>属性列表</PanelTitle>
            <Properties muted />
          </Panel>
        </Column>
        <Column>
          <Panel $open>
            <Panel as="div" $h={396} $bare>
              <Strip />
              <PanelTitle>构件做法</PanelTitle>
              <Toolbar>
                <Tool icon={<AddQuota />} text="添加定额" />
                <Tool icon={<DelDoc />} text="删除" />
                <Tool icon={<Query />} text="查询" menu />
                <Tool icon={<Fx />} text="换算" menu />
                <Tool icon={<Brush />} text="做法刷" />
                <Tool icon={<MethodQuery />} text="做法查询" />
                <Tool icon={<Extract />} text="提取做法" />
                <Tool icon={<CurrentAuto />} text="当前构件自动套做法" />
              </Toolbar>
              <TableArea>
                <MethodGrid>
                  <Cols widths={[21, ...methodCols.map(([, w]) => w)]} />
                  <thead><tr><th aria-label="序号" />{methodCols.map(([t]) => <HeadCell key={t} $on={t === "工程量表达式"}>{t}</HeadCell>)}</tr></thead>
                  <tbody>
                    <tr>
                      <th>1</th><td>0</td><MidCell>补</MidCell><td>补充子目</td><MidCell>m</MidCell>
                      <ExprCell><ExprPick><select aria-label="工程量表达式" defaultValue="更多..."><option>更多...</option></select><Ic w={8} h={5}><path d="M0 0h8L4 5z" fill="#5aa2cf" stroke="none" /><path d="M0 .5h8" stroke="#2a6f9e" /></Ic></ExprPick></ExprCell>
                      <td /><td />
                      <MidCell><Tick type="checkbox" aria-label="措施项目" /></MidCell><td />
                      <MidCell><Tick type="checkbox" aria-label="自动套" /></MidCell>
                    </tr>
                  </tbody>
                </MethodGrid>
              </TableArea>
            </Panel>
            <SubBar $h={35} />
            <SubBar $h={26} />
            <Blank />
            <GripBar><Grip /></GripBar>
          </Panel>
        </Column>
      </DefineColumns>
    </DefineBody>
  </DefineWindow>
);

const ExprBody = styled.form`
  flex: 1;
  min-height: 0;
  display: flex;
  flex-direction: column;
  padding: 9px 9px 0;
  border: 1px solid #b9c3d6;
  border-top: 0;
  textarea {
    flex: none;
    display: block;
    height: 60px;
    border: 1px solid #777;
    resize: none;
    outline: 0;
  }
`;
const ListHead = styled.div`
  flex: none;
  display: flex;
  align-items: center;
  justify-content: space-between;
  height: 29px;
  padding-right: 16px;
`;
const Choice = styled.label`
  display: flex;
  align-items: center;
  gap: 7px;
`;
const CodeBox = styled.div`
  flex: 1;
  min-height: 0;
  border: 1px solid ${c.line};
  background: #fff;
`;
const CodeGrid = styled(Grid)`
  thead tr { height: 20px; }
  thead th { background: ${c.cellSel}; font-weight: 700; }
  thead th:first-child { background: ${c.face}; }
  tbody tr { height: 22px; }
  tbody tr:first-child { height: 23px; }
  tbody td { background: #aee8fa; }
`;
const CodeRow = styled.tr<{ $on: boolean }>`
  ${(p) => p.$on && css`
    &&& th { background: ${c.cellSel}; font-weight: 700; }
    &&& td { border-top: 1px solid #38a3cf; border-bottom: 2px solid #38a3cf; }
    &&& td:last-child { background: ${c.cellSel}; border-right: 2px solid #38a3cf; }
  `}
`;
const ExprFoot = styled.div`
  flex: none;
  display: flex;
  align-items: flex-start;
  gap: 6px;
  height: 41px;
  padding-top: 6px;
`;
const Choices = styled.div`
  display: flex;
  gap: 12px;
  margin-right: auto;
  padding: 4px 0 0 1px;
`;
const Radio = styled.input`
  appearance: none;
  display: grid;
  place-items: center;
  width: 14px;
  height: 14px;
  margin: 0;
  border: 1px solid #808080;
  border-radius: 50%;
  background: #fff;
  &:checked::after {
    content: "";
    width: 6px;
    height: 6px;
    border-radius: 50%;
    background: #4b9dfb;
  }
`;
const Corner = styled.div`
  position: absolute;
  right: 4px;
  bottom: 4px;
`;

const codes = [
  ["天棚抹灰面积", "TPMHMJ"], ["天棚装饰面积", "TPZSMJ"], ["梁抹灰面积", "LMHMJ"], ["满堂脚手架面积", "MTJSJMJ"],
  ["超高满堂脚手架面积", "CGMTJSJMJ"], ["天棚周长", "TPZC"], ["天棚投影面积", "TPTYMJ"],
];

const Expression = () => (
  <ExprWindow role="dialog" aria-label="工程量表达式">
    <Title text="工程量表达式" />
    <ExprBody>
      <textarea aria-label="表达式" />
      <ListHead>
        <span>代码列表</span>
        <Choice><Tick type="checkbox" />显示中间量</Choice>
      </ListHead>
      <CodeBox>
        <CodeGrid>
          <Cols widths={[21, 241, 241]} />
          <thead><tr><th aria-label="序号" /><th>工程量名称</th><th>工程量代码</th></tr></thead>
          <tbody>
            {codes.map(([n, k], i) => <CodeRow key={k} $on={i === 3}><th>{i + 1}</th><td>{n}</td><td>{k}</td></CodeRow>)}
          </tbody>
        </CodeGrid>
      </CodeBox>
      <ExprFoot>
        <Choices>
          <Choice><Radio type="radio" name="mode" defaultChecked />替换</Choice>
          <Choice><Radio type="radio" name="mode" />追加</Choice>
        </Choices>
        <PlainButton type="button" $w={78} $primary>确定</PlainButton>
        <PlainButton type="button" $w={78}>取消</PlainButton>
      </ExprFoot>
    </ExprBody>
    <Corner><Grip /></Corner>
  </ExprWindow>
);

/* ---------- page ---------- */

const tabs = ["开始", "工程设置", "建模", "视图", "工具", "工程量", "云应用"];

export default function App() {
  return (
    <Page>
      <Global />
      <Header>
        <LogoBox>
          <Logo />
          <Ic w={5} h={5}><path d="M5 0v5H0z" fill="#777" stroke="none" /></Ic>
        </LogoBox>
        <TopRow>
          <Quick>
            {quick.map((q, i) => q
              ? <QuickButton key={i} aria-label={q[0]}>{q[1]}</QuickButton>
              : <QuickCaret key={i} aria-label={i < 5 ? "撤销列表" : "重做列表"}><Caret color={i < 5 ? "#555" : "#aaa"} /></QuickCaret>)}
            <Ic w={8} h={8}><path d="M1 1.500h6" stroke="#555" /><path d="M1 4h6L4 7z" fill="#555" stroke="none" /></Ic>
          </Quick>
          <AppTitle>广联达BIM土建计量平台 GTJ2018</AppTitle>
          <AppControls>
            <button aria-label="最小化窗口"><MinIcon color="#666" /></button>
            <button aria-label="还原窗口"><RestoreIcon /></button>
            <button aria-label="关闭窗口"><CloseIcon color="#666" /></button>
          </AppControls>
        </TopRow>
        <TabRow>
          {tabs.map((t) => <RibbonTab key={t} $active={t === "工程设置"}>{t}</RibbonTab>)}
          <HeaderTools>
            <HelpSearch>
              <input aria-label="帮助搜索" placeholder="可以合并不同工程的楼层及构件类型吗?" />
              <SearchIcon color="#b5b5b5" />
            </HelpSearch>
            <UserButton>
              <Ic><path d="M1.500 6c0-2 13-2 13 0 1 3 1 9-6.500 9S.5 9 1.500 6z" fill="#5dbb2f" stroke="#3f9a22" /><circle cx="4" cy="3" r="2" fill="#fff" stroke="#8aa77a" /><circle cx="8" cy="2.500" r="2" fill="#fff" stroke="#8aa77a" /><circle cx="12" cy="3" r="2" fill="#fff" stroke="#8aa77a" /><path d="M4 8c2 2 6 2 8 0" stroke="#c5ee9a" strokeWidth="2" /></Ic>
              力工
            </UserButton>
            <button aria-label="通知"><Ic><path d="M2 12c2-1 1.500-3 2-6 .5-3 1.500-4 4-5 2.500 1 3.500 2 4 5s0 5 2 6z" fill="#8a8a8a" stroke="none" /><path d="M6 14.500h4" stroke="#8a8a8a" strokeWidth="2" /></Ic></button>
            <button aria-label="消息"><Ic w={17}><path d="M7.500 3C12 3 15 5 15 8.500S11 14 8 14l-1 2-2-3C2 12.500.5 11 .5 8.500.5 5 3.500 3 7.500 3z" fill="#8a8a8a" stroke="none" /><path d="M4 9h1.500M7 9h1.500M10 9h1.500" stroke="#fff" strokeWidth="1.500" /><circle cx="13.500" cy="4" r="3.500" fill="#f8b62c" stroke="none" /><circle cx="13.500" cy="3.500" r="1" stroke="#fff" /></Ic></button>
            <button aria-label="帮助"><Ic><path d="M1.500 5c0-4 6-4 6-.5 0 2.500-3 2.500-3 5.500M4.500 12v2" stroke="#8a8a8a" strokeWidth="1.800" /><path d="M11 6.500h5l-2.500 3z" fill="#8a8a8a" stroke="none" /></Ic></button>
            <button aria-label="皮肤"><Ic><path d="M5 1.500c1 1.500 5 1.500 6 0l4.500 2.500-1.500 3.500-2-1v8.500H4V6.500l-2 1L.5 4z" fill="#8a8a8a" stroke="none" /></Ic></button>
            <button aria-label="折叠功能区"><Ic w={14}><path d="M.5 2.500h13v11H.5z" stroke="#8a8a8a" /><path d="M0 2h14v3H0z" fill="#8a8a8a" stroke="none" /><path d="M7 12V7M4.500 9.500L7 7l2.500 2.500" stroke="#8a8a8a" /></Ic></button>
          </HeaderTools>
        </TabRow>
      </Header>
      <PeekShadow />
      <Ribbon>
        <Group>
          <GroupButtons>
            <RibbonButton><RInfo />工程信息</RibbonButton>
            <RibbonButton><RFloor />楼层设置</RibbonButton>
          </GroupButtons>
          基本设置
        </Group>
        <Group>
          <GroupButtons>
            <RibbonButton><RWrench />计算设置</RibbonButton>
            <RibbonButton aria-label="计算规则"><RHex /></RibbonButton>
          </GroupButtons>
          土建设置
        </Group>
        <Group>
          <GroupButtons>
            <RibbonButton aria-label="钢筋计算设置"><RRebar /></RibbonButton>
            <RibbonButton aria-label="比重设置"><RPen d="M3 7c1-5 6-4 6 3v10c0 8-4 10-6 7M15 27c3 3 5-1 5-7V10c0-6-2-8-5-7" /></RibbonButton>
            <RibbonButton aria-label="弯钩设置"><RPen d="M3 14c-1-7 4-7 6-7h12M3 24c1 5 5 5 8 5h10M15 7v22" /></RibbonButton>
            <RibbonButton aria-label="弯钩调整值设置"><RPen d="M3 2v11c0 6 6 6 6 1v-4M11 26c2 4 6 4 6-1V9M23 16v14" /></RibbonButton>
            <RibbonButton aria-label="损耗设置" $wide><RBeam /></RibbonButton>
          </GroupButtons>
        </Group>
      </Ribbon>
      <FloorBar>
        <Pick w={100} value="首层" label="当前楼层" />
        <Pick w={100} value="装修" label="构件分类" />
      </FloorBar>
      <Workspace>
        <Column $w={116}>
          <Panel as="nav">
            <NavHead>
              <Ic w={14} h={12}><path d="M4 4.500v7M.5 8h7M10 .5v7M6.500 4h7" strokeWidth="1.800" /></Ic>
              <ViewButton aria-label="列表视图"><Ic><path d="M1.500 1.500h2v2h-2zM1.500 7h2v2h-2zM1.500 12.500h2v2h-2zM6 2.500h9M6 8h9M6 13.500h9" stroke={c.ibl} /></Ic></ViewButton>
              <ViewButton aria-label="图标视图"><Ic><path d="M.5 1.500h15v13H.5z" stroke={c.ibl} /><path d="M.5 1.500h15v4H.5z" fill={c.ibl} stroke={c.ibl} /><path d="M3 3.500h1M6 3.500h1M10 3.500h3" stroke="#fff" /><path d="M3 8.500h9M3 11.500h7" stroke={c.ibl} /></Ic></ViewButton>
            </NavHead>
            <NavTree nodes={mainTree} />
          </Panel>
        </Column>
        <Column $w={315}>
          <Panel $h={319}>
            <Strip $h={12} />
            <PanelTitle $strong>构件列表</PanelTitle>
            <Toolbar><Tool icon={<NewDoc />} text="新建" menu /></Toolbar>
            <SearchRow><input aria-label="搜索构件列表" placeholder="搜索构件..." /></SearchRow>
            <Components />
          </Panel>
          <Panel>
            <Strip $h={12} />
            <PanelTitle $strong>属性列表</PanelTitle>
            <Properties />
          </Panel>
        </Column>
        <Canvas>
          <Ic w={50} h={20}><path d="M1 10h12l-6 9z" fill="#0a10c8" stroke="none" /><path d="M23 10l8 5-8 4z" fill="#a01010" stroke="none" /><path d="M38 19l4-7 4 7" stroke="#b01212" strokeWidth="2" /></Ic>
        </Canvas>
        <LayerPanel />
      </Workspace>
      <Status>
        <Field $w={200}>X = 0 Y = 0</Field>
        <Field $w={80}>层高：<span>3</span></Field>
        <Field $w={130}>标高: -0.05~2.95</Field>
        <Field $w={100}>0</Field>
        <Field $w={79}>隐藏：<span>0</span></Field>
        <StatusButton $w={25} aria-label="正交"><Ic><path d="M3.500 3v10H14M3.500 9.500h4V13" stroke="#333" /></Ic></StatusButton>
        <StatusButton $w={36} $active aria-label="对象捕捉"><Ic w={18}><path d="M3.500 2.500h12v12h-12z" strokeWidth="1.300" /><path d="M.5.500h5v5h-5z" fill="#f6a05e" stroke={c.io} /></Ic><Caret /></StatusButton>
        <StatusButton $w={25} $dim aria-label="交点"><Ic><path d="M1 1l14 14M15 1L1 15" stroke="#888" /></Ic></StatusButton>
        <StatusButton $w={36} aria-label="角度捕捉"><Ic><path d="M13 1L2 13.500h13" stroke="#333" strokeWidth="1.300" /><path d="M7 8l4 3" stroke="#333" /></Ic><Caret /></StatusButton>
        <StatusButton $w={36} aria-label="偏移"><Ic><path d="M4 1v7M.5 4.500h7M4 8v3" stroke="#333" strokeWidth="1.300" /><path d="M5 10h10v4H5z" fill="#333" stroke="none" /></Ic><Caret /></StatusButton>
        <StatusButton $w={73}>跨图层选择</StatusButton>
        <StatusButton $w={61}>折线选择</StatusButton>
        <span>按鼠标左键指定插入点,按右键结束或 ESC 取消</span>
        <Fps>1000 FPS</Fps>
      </Status>
      <Taskbar><time>19:45:00</time></Taskbar>
      <Define />
      <Expression />
    </Page>
  );
}
